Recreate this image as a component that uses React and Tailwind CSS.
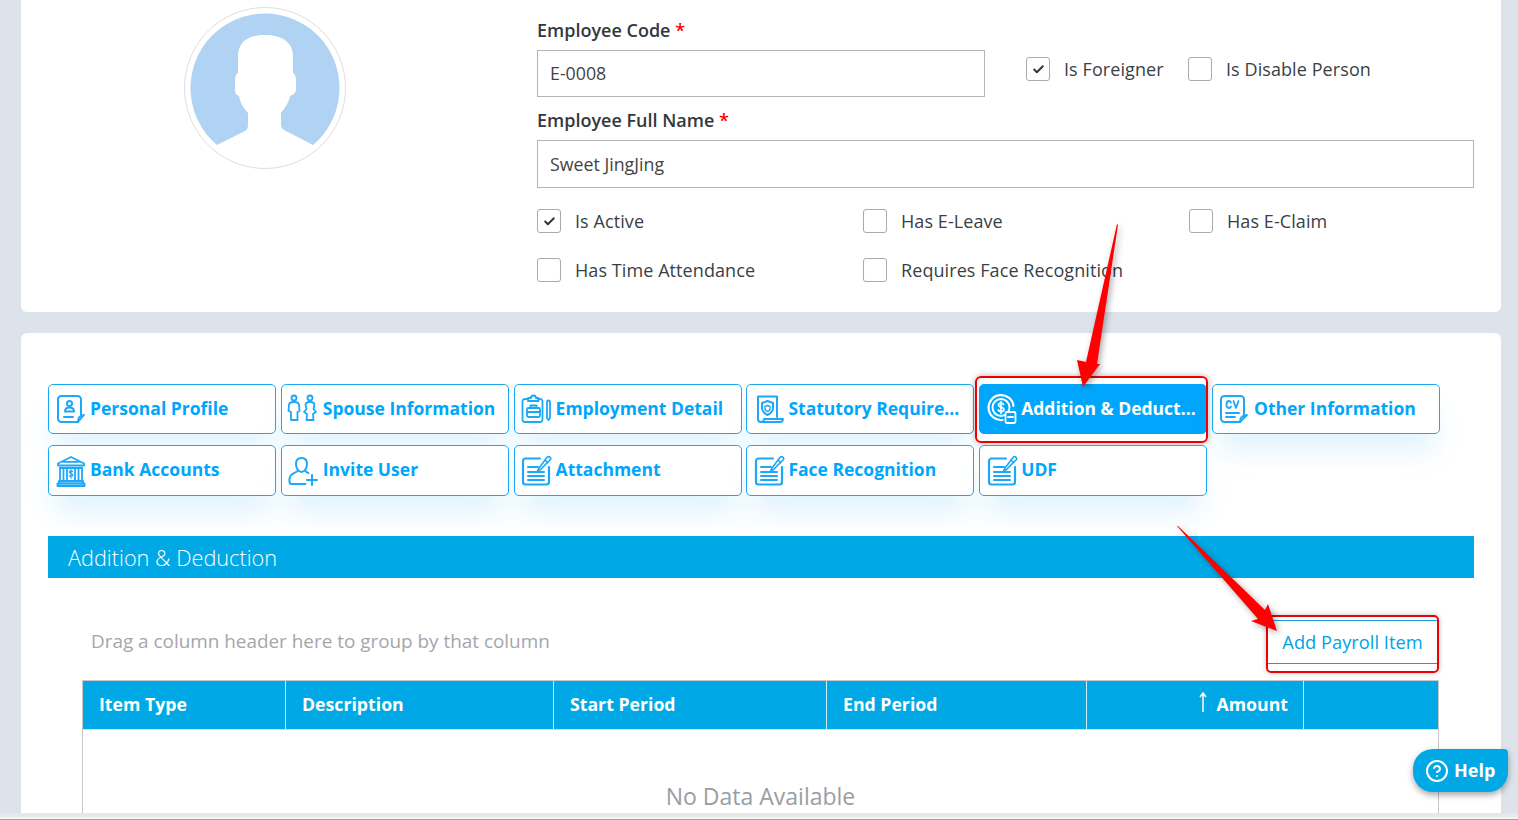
import { Check, CircleHelp } from 'lucide-react';

const font = { fontFamily: '"Open Sans", "Liberation Sans", sans-serif' };

const Svg = ({ children, stroke = '#1ba8f8' }) => (
  <svg width="34" height="34" viewBox="0 0 34 34" fill="none" stroke={stroke} strokeWidth="1.8" strokeLinecap="round" strokeLinejoin="round">
    {children}
  </svg>
);

const ProfileIcon = ({ stroke }) => (
  <Svg stroke={stroke}>
    <path d="M24 30H7.500A3.500 3.500 0 0 1 4 26.500V7.500A3.500 3.500 0 0 1 7.500 4h16A3.500 3.500 0 0 1 27 7.500V23" strokeWidth="2" />
    <path d="M24 30c0-4 1-6 6-7z" />
    <circle cx="15.500" cy="11.500" r="2.500" strokeWidth="2" />
    <path d="M11 19.500c0-3 2-4 4.500-4s4.500 1 4.500 4z" strokeWidth="2" />
    <path d="M10 25h9" strokeWidth="2" />
  </Svg>
);

const SpouseIcon = ({ stroke }) => (
  <Svg stroke={stroke}>
    <circle cx="8" cy="6" r="2.500" />
    <circle cx="24" cy="6" r="2.500" />
    <path d="M3 13c0-2 2.500-3 5-3s5 1 5 3l.5 6-2 1v8H5v-8l-2.500-1z" />
    <path d="M19.500 13c0-2 2-3 4.500-3s4.500 1 4.500 3l-1 4 2.500 3-3 2 .5 6h-7l.5-6-3-2 2.500-3z" />
  </Svg>
);

const EmploymentIcon = ({ stroke }) => (
  <Svg stroke={stroke}>
    <path d="M8 7H6a2.500 2.500 0 0 0-2.500 2.500v18A2.500 2.500 0 0 0 6 30h15a2.500 2.500 0 0 0 2.500-2.500v-18A2.500 2.500 0 0 0 21 7h-2" />
    <path d="M9 9V6h3a2.500 2.500 0 0 1 5 0h2.500v3z" />
    <rect x="8" y="16" width="13" height="9" rx="1.500" />
    <path d="M11.500 16v-2.500h6V16M8 20h13" />
    <path d="M28 10v16l1.500 2 1.500-2V10a1.500 1.500 0 0 0-3 0z" />
  </Svg>
);

const StatutoryIcon = ({ stroke }) => (
  <Svg stroke={stroke}>
    <path d="M9 30c-2 0-3-1.500-3-3V4.500h19V25" strokeWidth="2" />
    <path d="M9 30c2 0 3-1.500 3-3h19c0 2-1 3-3 3z" />
    <path d="M15.500 9l5.500 2v5c0 3.500-2.500 5.500-5.500 7-3-1.500-5.500-3.500-5.500-7v-5z" strokeWidth="2" />
    <path d="M13 14.500l2.500-1 2.500 1v2c0 1.500-1 2.500-2.500 3-1.500-.5-2.500-1.500-2.500-3z" strokeWidth="1.400" />
  </Svg>
);

const CoinIcon = ({ stroke }) => (
  <Svg stroke={stroke}>
    <circle cx="16" cy="15.500" r="8.500" strokeWidth="2" />
    <path d="M17.500 28A12.500 12.500 0 1 1 28.500 14" strokeWidth="2.200" />
    <path d="M18.500 12.500c-.5-1-1.500-1.500-2.500-1.500-1.500 0-2.500 1-2.500 2 0 3 5.500 1.500 5.500 4.500 0 1.200-1.200 2-3 2-1.200 0-2.200-.5-2.700-1.500M16 9.500v12" strokeWidth="1.700" />
    <rect x="20.500" y="20" width="10" height="11" rx="1.500" fill={stroke === '#ffffff' ? '#00a6fb' : 'none'} strokeWidth="1.800" />
    <path d="M23 25h5" strokeWidth="1.800" />
  </Svg>
);

const CvIcon = ({ stroke }) => (
  <Svg stroke={stroke}>
    <path d="M23 30H7.500A3.500 3.500 0 0 1 4 26.500V7.500A3.500 3.500 0 0 1 7.500 4h16A3.500 3.500 0 0 1 27 7.500V23" strokeWidth="2" />
    <path d="M23 30c0-4 1-6 7-7z" />
    <path d="M14 10.500c-.5-1-1-1.500-2-1.500-1.500 0-2.500 1.200-2.500 3.500s1 3.500 2.500 3.500c1 0 1.500-.5 2-1.500M16.500 9l2.500 7 2.500-7" strokeWidth="1.800" />
    <path d="M9 21h13M9 25h9" strokeWidth="1.800" />
  </Svg>
);

const BankIcon = ({ stroke }) => (
  <Svg stroke={stroke}>
    <path d="M17 3L4 9.500v2h26v-2z" />
    <path d="M6 14h22M9 7.800h16" />
    <path d="M6 14v13M9.500 14v13M24.500 14v13M28 14v13M13 14h8v13h-8z" />
    <path d="M18.500 17.500c-.5-.5-1-.8-1.500-.8-1 0-1.700.6-1.700 1.400 0 2 3.500 1 3.500 3 0 .8-.8 1.400-1.800 1.400-.8 0-1.300-.3-1.800-.8M17 15.800v8.400" strokeWidth="1.200" />
    <path d="M5 27h24v2.500H5zM3.500 29.500h27V32h-27z" fill={stroke} fillOpacity="0.35" />
  </Svg>
);

const InviteIcon = ({ stroke }) => (
  <Svg stroke={stroke}>
    <path d="M15.500 4c3.500 0 5.500 2.500 5.500 6s-2 8-5.500 8-5.500-4.500-5.500-8 2-6 5.500-6z" strokeWidth="2" />
    <path d="M11.500 17c-.5 1.500-8 2-8 8v3c0 1.300.7 2 2 2h14" strokeWidth="2" />
    <path d="M19.500 17c.5 1 1.500 1.500 3 2.200" strokeWidth="2" />
    <path d="M26 21v10M21 26h10" strokeWidth="2" />
  </Svg>
);

const NoteIcon = ({ stroke }) => (
  <Svg stroke={stroke}>
    <path d="M30 13v15a2.500 2.500 0 0 1-2.500 2.500h-21A2.500 2.500 0 0 1 4 28V7a2.500 2.500 0 0 1 2.500-2.500H21" strokeWidth="2.200" />
    <path d="M9 13h10M9 18h16M9 22h16M9 26h16" strokeWidth="2" />
    <path d="M20 14l-1.500 3 3-1.500L31 6c.8-.8.8-2 0-2.800s-2-.8-2.800 0z" strokeWidth="1.600" />
    <path d="M26 6l2.500 2.500" strokeWidth="1.600" />
  </Svg>
);

const TABS = [
  { label: 'Personal Profile', icon: ProfileIcon },
  { label: 'Spouse Information', icon: SpouseIcon },
  { label: 'Employment Detail', icon: EmploymentIcon },
  { label: 'Statutory Requirement', icon: StatutoryIcon },
  { label: 'Addition & Deduction', icon: CoinIcon, active: true },
  { label: 'Other Information', icon: CvIcon },
  { label: 'Bank Accounts', icon: BankIcon },
  { label: 'Invite User', icon: InviteIcon },
  { label: 'Attachment', icon: NoteIcon },
  { label: 'Face Recognition', icon: NoteIcon },
  { label: 'UDF', icon: NoteIcon },
];

const COLUMNS = [
  { label: 'Item Type' },
  { label: 'Description' },
  { label: 'Start Period' },
  { label: 'End Period' },
  { label: 'Amount', sorted: true },
  { label: '' },
];

function Checkbox({ label, checked, className = '' }) {
  return (
    <div className={`flex items-center gap-[14px] ${className}`}>
      <span className="flex h-[24px] w-[24px] shrink-0 items-center justify-center rounded-[3px] border border-[#aaaaaa] bg-white">
        {checked && <Check size={13} strokeWidth={3.5} className="text-[#333]" />}
      </span>
      <span className="whitespace-nowrap text-[18px] font-medium leading-[24px] tracking-[0.08px] text-[#3a3f45]">{label}</span>
    </div>
  );
}

function Label({ children }) {
  return (
    <div className="h-[24px] text-[18px] font-semibold leading-[24px] text-[#33383d]">
      {children} <span className="text-[#ff0000]">*</span>
    </div>
  );
}

function Avatar() {
  return (
    <svg width="162" height="162" viewBox="0 0 162 162">
      <circle cx="81" cy="81" r="74.500" fill="#b0d3f4" />
      <path
        d="M81 28C63 28 54 36 54 49V66C52 67 51 70 51 73V82C51 86 52 88 55 89C56 95 59 101 64 106V118C64 121 63 123 61 124L33 138L33 162H129V138L102 124C99 123 97 121 97 118V106C101 101 105 95 106 89C110 87 112 86 112 82V73C112 70 111 67 109 66V49C109 36 99 28 81 28Z"
        fill="#ffffff"
      />
      <circle cx="81" cy="81" r="80.500" fill="none" stroke="#dedede" />
    </svg>
  );
}

export default function App() {
  return (
    <div className="relative flex h-[820px] w-[1518px] flex-col overflow-hidden bg-[#dce3eb]" style={font}>
      {/* Employee header card */}
      <div className="ml-[21px] mr-[17px] flex h-[312px] shrink-0 rounded-b-[6px] bg-white">
        <div className="flex w-[488px] shrink-0 justify-center pt-[7px]">
          <div className="h-[162px] w-[162px]">
            <Avatar />
          </div>
        </div>
        <div className="ml-[28px] w-[937px] pt-[18px]">
          <Label>Employee Code</Label>
          <div className="mt-[8px] flex items-start">
            <div className="flex h-[47px] w-[448px] items-center border border-[#b5b5b5] px-[12px] text-[17.8px] text-[#444]">E-0008</div>
            <div className="ml-[41px] mt-[7px] flex">
              <Checkbox label="Is Foreigner" checked className="w-[162px]" />
              <Checkbox label="Is Disable Person" />
            </div>
          </div>
          <div className="mt-[11px]">
            <Label>Employee Full Name</Label>
          </div>
          <div className="mt-[8px] flex h-[48px] items-center border border-[#b5b5b5] px-[12px] text-[17.8px] text-[#444]">Sweet JingJing</div>
          <div className="mt-[21px] grid grid-cols-[326px_326px_1fr] gap-y-[25px]">
            <Checkbox label="Is Active" checked />
            <Checkbox label="Has E-Leave" />
            <Checkbox label="Has E-Claim" />
            <Checkbox label="Has Time Attendance" />
            <Checkbox label="Requires Face Recognition" />
          </div>
        </div>
      </div>

      {/* Detail card */}
      <div className="ml-[21px] mr-[17px] mt-[21px] min-h-0 flex-1 overflow-hidden rounded-t-[6px] bg-white px-[27px] pt-[51px]">
        <div className="grid w-[1392px] grid-cols-6 grid-rows-[50px_51px] gap-x-[4.8px] gap-y-[11px]">
          {TABS.map((tab, i) => {
            const Icon = tab.icon;
            return (
              <div
                key={tab.label}
                className={`relative flex items-center rounded-[5px] border ${
                  tab.active
                    ? 'border-[#00a6fb] bg-[#00a6fb] text-white'
                    : 'border-[#1ba8f0] bg-white text-[#00a6fb] shadow-[0_22px_28px_-6px_rgba(30,170,250,0.14)]'
                }`}
              >
                <span className="flex w-[41px] shrink-0 justify-center pl-[2px]">
                  <Icon stroke={tab.active ? '#ffffff' : '#1ba8f8'} />
                </span>
                <span className={`truncate pr-[10px] text-[17.5px] font-bold leading-[24px] ${i < 6 ? 'pb-[2px]' : 'pb-[4px]'}`}>{tab.label}</span>
                {tab.active && (
                  <span className="absolute bottom-[-10px] left-[-5px] right-[-2px] top-[-9px] rounded-[6px] border-2 border-[#f00000] shadow-[0_0_6px_rgba(0,0,0,0.3)]" />
                )}
              </div>
            );
          })}
        </div>

        <div className="mt-[40px] flex h-[42px] items-center bg-[#00a9e6] pl-[20px] pt-[2px] text-[21.7px] font-light text-white">
          Addition &amp; Deduction
        </div>

        {/* Grid toolbar */}
        <div className="ml-[34px] mr-[35px] flex h-[102px] items-start justify-between pl-[9px] pt-[42px]">
          <span className="text-[18.9px] leading-[42px] text-[#a3a7ab]">Drag a column header here to group by that column</span>
          <div className="relative mr-[1px] flex h-[44px] w-[171px] items-center justify-center border-y border-[#1a9cd6] text-[18.3px] font-medium text-[#00a3e6]">
            Add Payroll Item
            <span className="absolute bottom-[-10px] left-[-1px] right-[-1px] top-[-6px] rounded-[5px] border-2 border-[#f00000] shadow-[0_0_5px_rgba(0,0,0,0.25)]" />
          </div>
        </div>

        {/* Grid */}
        <div className="ml-[34px] mr-[35px] h-[200px] border border-[#c8c8c8]">
          <div className="grid h-[49px] grid-cols-[203px_268px_273px_260px_217px_1fr] border-b border-[#dddddd] bg-[#00a9e6]">
            {COLUMNS.map((col, i) => (
              <div
                key={i}
                className={`flex items-center border-r border-white/80 pb-[2px] pl-[16px] text-[17.7px] font-bold text-white last:border-r-0 ${col.sorted ? 'justify-end pr-[15px]' : 'pr-[16px]'}`}
              >
                {col.sorted && (
                  <svg width="12" height="22" viewBox="0 0 12 22" fill="none" stroke="#ffffff" strokeWidth="1.500" className="mr-[8px] -mt-[4px]">
                    <path d="M6 21V2M3 6l3-4 3 4" />
                  </svg>
                )}
                {col.label}
              </div>
            ))}
          </div>
          <div className="pt-[52px] text-center text-[23px] leading-[28px] text-[#9a9ea3]">No Data Available</div>
        </div>
      </div>

      <div className="h-[7px] shrink-0 border-b border-t-[4px] border-b-[#a8a2a0] border-t-[#e8e8e8] bg-[#f4f4f4]" />

      {/* Help button */}
      <div className="absolute left-[1413px] top-[749px] flex h-[43px] w-[95px] items-center gap-[5px] rounded-[20px] rounded-tr-[4px] bg-[#00a9e6] pl-[12px] text-[18px] font-bold text-white shadow-[0_3px_6px_rgba(0,0,0,0.35)]">
        <CircleHelp size={24} strokeWidth={2} />
        Help
      </div>

      {/* Red annotation arrows */}
      <svg className="pointer-events-none absolute left-0 top-0 drop-shadow-[2px_2px_3px_rgba(0,0,0,0.35)]" width="1518" height="820" viewBox="0 0 1518 820">
        <polygon points="1117,224 1118,225 1097,364 1100,364 1083,387 1077,360 1086,362" fill="#ff0000" />
        <polygon points="1177,526 1178,526 1265,610 1268,604 1277,631 1251,621 1258,619" fill="#ff0000" />
      </svg>
    </div>
  );
}
